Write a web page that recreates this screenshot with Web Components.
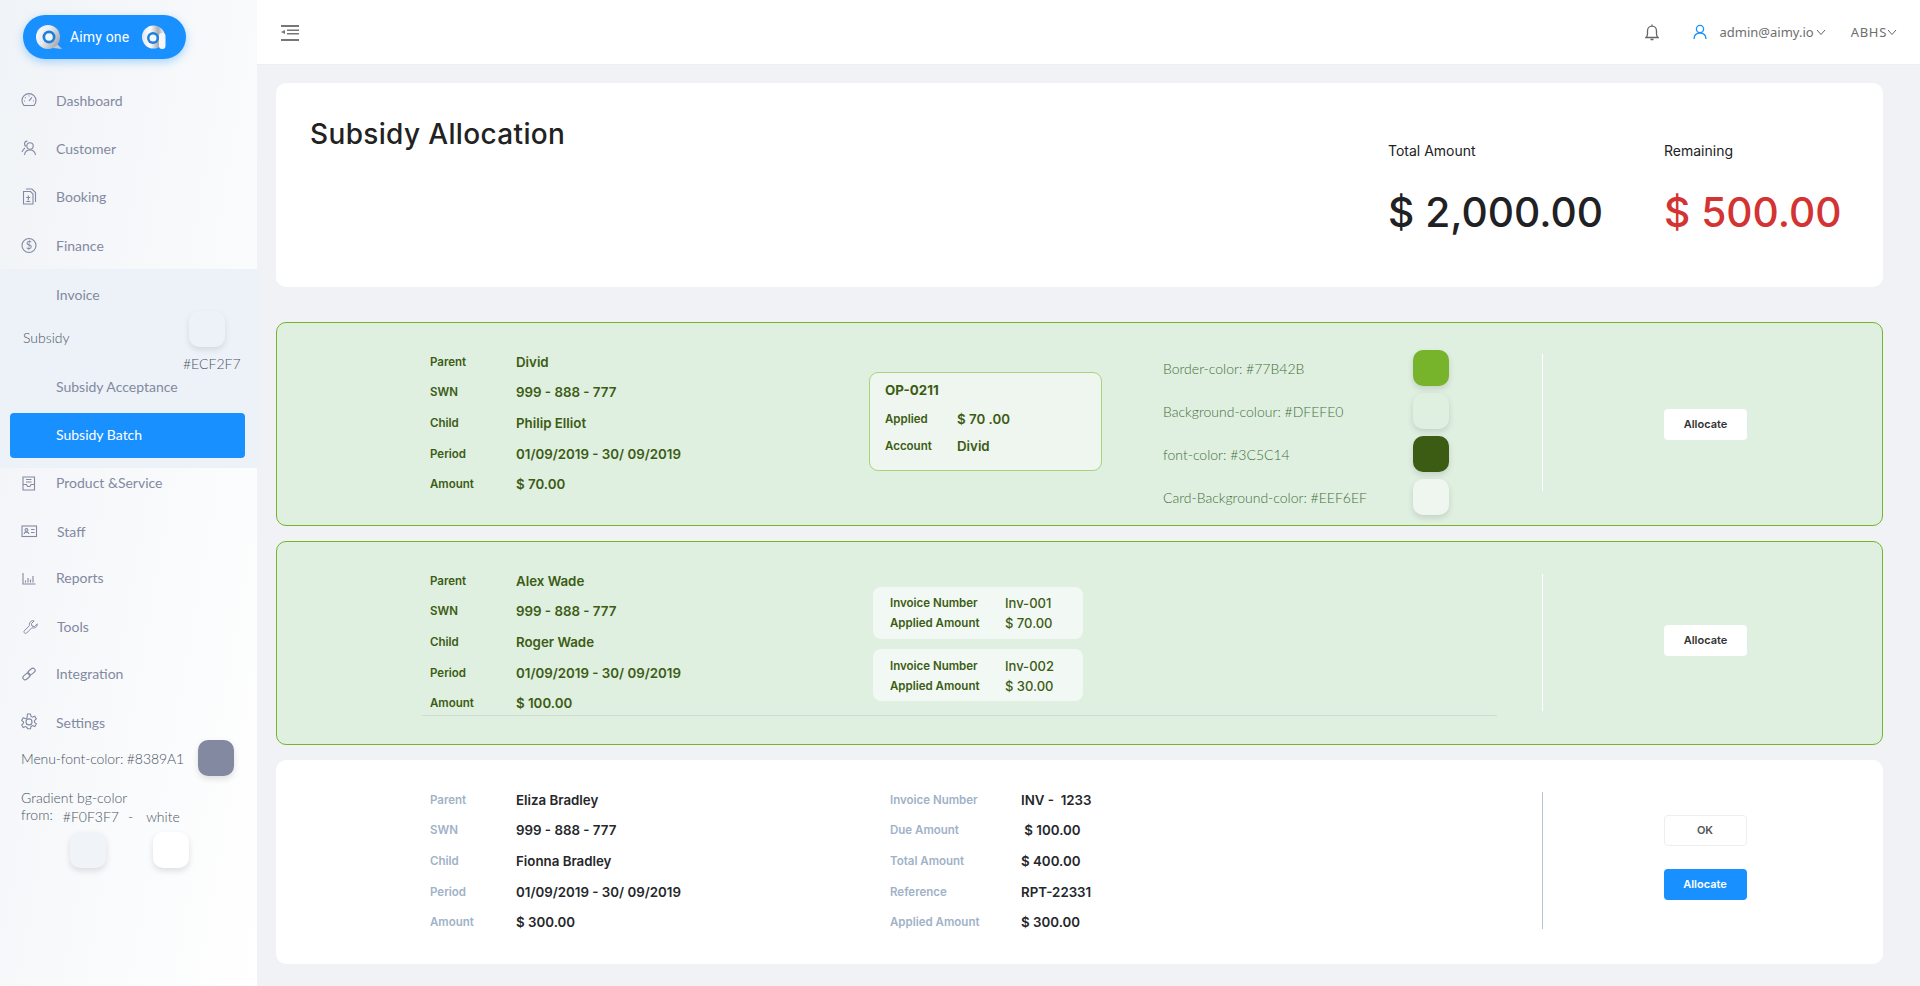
<!doctype html>
<html lang="en">
<head>
<meta charset="utf-8">
<title>Subsidy Allocation</title>
<style>
  html, body { margin: 0; height: 986px; overflow: hidden; background: #f0f2f5; font-family: Inter, sans-serif; }
</style>
</head>
<body>
<app-shell>
  <side-bar slot="side">
    <brand-pill></brand-pill>
    <nav-item icon="gauge" style="margin-top:18px">Dashboard</nav-item>
    <nav-item icon="people">Customer</nav-item>
    <nav-item icon="booking">Booking</nav-item>
    <nav-item icon="dollar" style="margin-top:1px">Finance</nav-item>
    <sub-menu>
      <nav-item>Invoice</nav-item>
      <nav-group>Subsidy</nav-group>
      <nav-item style="margin-top:6px">Subsidy Acceptance</nav-item>
      <nav-item active style="margin-top:2px">Subsidy Batch</nav-item>
    </sub-menu>
    <nav-item icon="product" style="margin-top:-9px">Product &amp;Service</nav-item>
    <nav-item icon="staff" shift style="margin-top:1px">Staff</nav-item>
    <nav-item icon="reports" style="margin-top:-2px">Reports</nav-item>
    <nav-item icon="tools" shift style="margin-top:1px">Tools</nav-item>
    <nav-item icon="link" style="margin-top:-1px">Integration</nav-item>
    <nav-item icon="gear" style="margin-top:1px">Settings</nav-item>
    <menu-notes></menu-notes>
  </side-bar>
  <top-bar slot="top"></top-bar>
  <summary-card slot="main"></summary-card>
  <allocation-card slot="main" tone="green" style="margin-top:35px">
    <detail-list slot="details">
      <info-row label="Parent" value="Divid"></info-row>
      <info-row label="SWN" value="999 - 888 - 777"></info-row>
      <info-row label="Child" value="Philip Elliot"></info-row>
      <info-row label="Period" value="01/09/2019 - 30/ 09/2019"></info-row>
      <info-row label="Amount" value="$ 70.00"></info-row>
    </detail-list>
    <credit-box slot="middle"></credit-box>
    <color-notes slot="extra"></color-notes>
    <action-button slot="action" kind="plain">Allocate</action-button>
  </allocation-card>
  <allocation-card slot="main" tone="green" ruled style="margin-top:15px">
    <detail-list slot="details">
      <info-row label="Parent" value="Alex Wade"></info-row>
      <info-row label="SWN" value="999 - 888 - 777"></info-row>
      <info-row label="Child" value="Roger Wade"></info-row>
      <info-row label="Period" value="01/09/2019 - 30/ 09/2019"></info-row>
      <info-row label="Amount" value="$ 100.00"></info-row>
    </detail-list>
    <invoice-chip slot="middle" number="Inv-001" amount="$ 70.00"></invoice-chip>
    <invoice-chip slot="middle" number="Inv-002" amount="$ 30.00" style="padding-top:7px"></invoice-chip>
    <action-button slot="action" kind="plain" style="margin-bottom:6px">Allocate</action-button>
  </allocation-card>
  <allocation-card slot="main" style="margin-top:15px">
    <detail-list slot="details">
      <info-row label="Parent" value="Eliza Bradley"></info-row>
      <info-row label="SWN" value="999 - 888 - 777"></info-row>
      <info-row label="Child" value="Fionna Bradley"></info-row>
      <info-row label="Period" value="01/09/2019 - 30/ 09/2019"></info-row>
      <info-row label="Amount" value="$ 300.00"></info-row>
    </detail-list>
    <detail-list slot="middle" wide>
      <info-row label="Invoice Number" value="INV -  1233"></info-row>
      <info-row label="Due Amount" value="&nbsp;$ 100.00"></info-row>
      <info-row label="Total Amount" value="$ 400.00"></info-row>
      <info-row label="Reference" value="RPT-22331"></info-row>
      <info-row label="Applied Amount" value="$ 300.00"></info-row>
    </detail-list>
    <action-button slot="action" kind="ghost" style="margin-bottom:23px">OK</action-button>
    <action-button slot="action" kind="primary" style="margin-bottom:10px">Allocate</action-button>
  </allocation-card>
</app-shell>

<script>
const ICONS = {
  gauge: '<path d="M5 15.500h10a7 7 0 1 0-10 0z"/><path d="M10 10.800l3-3.500M6 7.300l.8.8M10 5.500v1M5 11h1M14 11h1"/>',
  people: '<circle cx="11" cy="8" r="3.200"/><path d="M5.500 17c.4-3.200 2.500-5 5.500-5s5 1.800 5.500 5M8.500 3.200C7 3 5.800 4 5.600 5.500c-.2 1.300.4 2.300 1.200 3M6 10c-1.400.8-2.300 2-3 4"/>',
  booking: '<path d="M4.500 5.500h7l2.500 2.500v10h-9.500zM7 3h6l3.500 3.500V16"/><path d="M9.300 9.500v5M7.300 11.500h4M7.300 15.500h4"/>',
  dollar: '<circle cx="10" cy="10.500" r="7"/>',
  product: '<path d="M4 5h11.500v13H4zM7 7.500h5.500M7 10h5.500M4 12.500h3.500l1 2h2.500l1-2h3.500"/>',
  staff: '<rect x="3" y="5" width="14.500" height="10.500"/><circle cx="7.500" cy="9" r="1.400"/><path d="M5 13c.3-1.400 1.200-1.900 2.500-1.900s2.200.5 2.500 1.900M12 8.500h3.500M12 11.500h3.500"/>',
  reports: '<path d="M4 6v11h12.500M6.500 15.500v-2M9 15.500V11M11.500 15.500v-3M14 15.500V9"/>',
  tools: '<g transform="translate(2.500 3) scale(.9)"><path d="M17.500 5.500l-3.200 3-2.600-.6-.7-2.700 3-3.100c-2.700-.8-5.500 1.100-5.200 4.200.1.600.1 1-.3 1.400l-5.300 5.300c-1.500 1.700.9 4 2.500 2.500l5.300-5.300c.4-.4.8-.4 1.400-.3 3 .5 5.500-1.600 4.900-4.400z"/></g>',
  link: '<g transform="rotate(-40 10 11)"><rect x="2.500" y="9" width="8" height="4.500" rx="2.250"/><rect x="9.500" y="8.500" width="8" height="4.500" rx="2.250"/></g>',
  gear: '<path d="M8.500 2h3l.5 2.400 1.500.8 2.300-.9 1.500 2.600-1.800 1.600v1.800l1.800 1.600-1.500 2.600-2.300-.9-1.500.8-.5 2.400h-3L8 15.400l-1.500-.8-2.300.9-1.500-2.600 1.800-1.600V10L2.700 8.400l1.500-2.600 2.300.9L8 5.900z"/><circle cx="10" cy="9.900" r="3"/>',
}

class AppShell extends HTMLElement {
  connectedCallback() {
    this.attachShadow({ mode: "open" }).innerHTML = `
      <style>
        :host { display: grid; grid-template-columns: 257px 1fr; height: 986px; }
        .side { position: relative; z-index: 1; }
        .col { display: flex; flex-direction: column; min-width: 0; }
        .main { padding: 18px 37px 0 19px; }
      </style>
      <div class="side"><slot name="side"></slot></div>
      <div class="col">
        <slot name="top"></slot>
        <div class="main"><slot name="main"></slot></div>
      </div>`
  }
}

class SideBar extends HTMLElement {
  connectedCallback() {
    this.attachShadow({ mode: "open" }).innerHTML = `
      <style>
        :host {
          background: linear-gradient(100deg, #f0f3f7 0%, #fff 100%);
          color: #8389a1;
          display: flex;
          flex-direction: column;
          font-family: Lato, sans-serif;
          height: 986px;
          padding-top: 15px;
          box-sizing: border-box;
        }
      </style>
      <slot></slot>`
  }
}

class BrandPill extends HTMLElement {
  connectedCallback() {
    this.attachShadow({ mode: "open" }).innerHTML = `
      <style>
        :host {
          align-items: center;
          align-self: flex-start;
          background: #1890ff;
          border-radius: 22px;
          box-shadow: 0 3px 8px rgba(24, 144, 255, .35);
          box-sizing: border-box;
          color: #fff;
          display: flex;
          font: 400 14px Roboto, sans-serif;
          height: 44px;
          letter-spacing: .15px;
          margin-left: 23px;
          padding-left: 13px;
          width: 163px;
        }
        span { margin: 0 13px 0 8px; white-space: nowrap; }
        svg { display: block; }
      </style>
      <svg width="26" height="24" viewBox="0 0 26 24">
        <defs><linearGradient id="a" x1="0" x2="1" y1="0" y2="0.6"><stop offset="0" stop-color="#fff"/><stop offset=".5" stop-color="#e6ecf2"/><stop offset="1" stop-color="#a9adb5"/></linearGradient></defs>
        <path d="M20 18l6 6-9-1z" fill="#c4c8ce"/>
        <circle cx="12" cy="12" r="12" fill="url(#a)"/>
        <circle cx="13" cy="12" r="6.500" fill="#1c80dc"/>
        <circle cx="13" cy="12" r="3.800" fill="#f2f7fb"/>
      </svg>
      <span>Aimy one</span>
      <svg width="24" height="24" viewBox="0 0 24 24">
        <defs><linearGradient id="b" x1="0" x2="1" y1="0" y2="0"><stop offset="0" stop-color="#dfe5ea"/><stop offset=".35" stop-color="#fff"/><stop offset=".7" stop-color="#a9adb5"/><stop offset="1" stop-color="#fff"/></linearGradient></defs>
        <circle cx="11.500" cy="12" r="11.500" fill="url(#b)"/>
        <rect x="17" y="8" width="6.500" height="16" rx="3.200" fill="#f4f6f8"/>
        <circle cx="11" cy="13" r="6" fill="#1c80dc"/>
        <circle cx="11" cy="13" r="3.500" fill="#f2f7fb"/>
      </svg>`
  }
}

class NavItem extends HTMLElement {
  connectedCallback() {
    const name = this.getAttribute("icon")
    const dollar = name === "dollar"
      ? '<text x="10" y="14.300" text-anchor="middle" font-size="11" font-family="Lato" fill="currentColor" stroke="none">$</text>'
      : ""
    const icon = name
      ? `<svg width="20" height="20" viewBox="0 0 20 20" fill="none" stroke="currentColor" stroke-width="1.100">${ICONS[name]}${dollar}</svg>`
      : ""
    this.attachShadow({ mode: "open" }).innerHTML = `
      <style>
        :host { display: block; height: 48px; color: #8389a1; }
        :host([active]) { background: #1890ff; border-radius: 4px; color: #fff; height: 45px; margin: 0 15px 0 10px; }
        .row { align-items: center; display: flex; font-size: 14px; height: 100%; padding: 0 0 2px 56px; position: relative; box-sizing: border-box; }
        :host([active]) .row { padding-left: 46px; }
        :host([shift]) .row { padding-left: 57px; }
        svg { left: 19px; position: absolute; top: 13px; }
      </style>
      <div class="row">${icon}<slot></slot></div>`
  }
}

class SubMenu extends HTMLElement {
  connectedCallback() {
    this.attachShadow({ mode: "open" }).innerHTML = `
      <style>
        :host { background: #ecf2f7; display: flex; flex-direction: column; margin: -1px -3px 0 0; padding: 2px 0 10px; position: relative; }
        .chip { background: #ecf2f7; border-radius: 10px; box-shadow: 0 3px 6px rgba(0,0,0,.1); height: 36px; left: 189px; position: absolute; top: 42px; width: 36px; }
        .hex { color: #4a5462; font-size: 14px; font-weight: 300; left: 183px; position: absolute; top: 86px; }
      </style>
      <slot></slot>
      <div class="chip"></div>
      <div class="hex">#ECF2F7</div>`
  }
}

class NavGroup extends HTMLElement {
  connectedCallback() {
    this.attachShadow({ mode: "open" }).innerHTML = `
      <style>
        :host { align-items: center; box-sizing: border-box; color: #4a5462; display: flex; font-size: 14px; font-weight: 300; height: 38px; padding: 0 0 2px 23px; }
      </style>
      <slot></slot>`
  }
}

class ColorChip extends HTMLElement {
  connectedCallback() {
    this.attachShadow({ mode: "open" }).innerHTML = `
      <style>
        :host { background: var(--chip, #fff); border-radius: 10px; box-shadow: 0 3px 6px rgba(0,0,0,.12); display: block; height: 36px; width: 36px; }
      </style>`
  }
}

class MenuNotes extends HTMLElement {
  connectedCallback() {
    this.attachShadow({ mode: "open" }).innerHTML = `
      <style>
        :host { color: #4a5462; display: block; font-size: 14px; font-weight: 300; margin-top: -7px; padding-left: 21px; }
        .top { align-items: center; display: flex; height: 36px; letter-spacing: -.1px; }
        .top color-chip { margin-left: auto; margin-right: 23px; }
        .head { line-height: 17px; margin-top: 13px; }
        .from { display: flex; line-height: 17px; margin-top: 2px; }
        .from span:nth-child(1) { margin-top: -2px; }
        .from span:nth-child(2) { margin-left: 10px; }
        .from span:nth-child(3) { margin-left: 9px; }
        .from span:nth-child(4) { margin-left: 13px; }
        .chips { display: flex; gap: 47px; margin: 7px 0 0 49px; }
      </style>
      <div class="top">Menu-font-color: #8389A1<color-chip style="--chip:#8389a1"></color-chip></div>
      <div class="head">Gradient bg-color</div>
      <div class="from"><span>from:</span><span>#F0F3F7</span><span>-</span><span>white</span></div>
      <div class="chips"><color-chip style="--chip:#f0f3f7"></color-chip><color-chip style="--chip:#fff"></color-chip></div>`
  }
}

class TopBar extends HTMLElement {
  connectedCallback() {
    const chevron = '<svg class="chev" width="10" height="7" viewBox="0 0 10 7" fill="none" stroke="#666" stroke-width="1"><path d="M1 1l4 4.500L9 1"/></svg>'
    this.attachShadow({ mode: "open" }).innerHTML = `
      <style>
        :host {
          align-items: center;
          background: #fff;
          border-bottom: 1px solid #eceef1;
          box-sizing: border-box;
          color: #6e6e6e;
          display: flex;
          font: 400 13px "Noto Sans", sans-serif;
          height: 65px;
          padding: 0 23px 0 24px;
        }
        .grow { flex: 1; }
        svg { display: block; }
        .chev { margin-left: 2px; }
        .menu { margin-top: 1px; }
        .bell { margin-right: 34px; }
        .user { margin-right: 13px; }
        .abhs { letter-spacing: .7px; margin: 0 -2px 0 25px; }
      </style>
      <svg class="menu" width="18" height="16" viewBox="0 0 18 16" fill="#777"><rect width="18" height="2"/><rect x="6" y="4.500" width="12" height="1.500"/><rect x="6" y="8" width="12" height="1.500"/><rect y="14" width="18" height="2"/><path d="M4 5v4L0 7z"/></svg>
      <div class="grow"></div>
      <svg class="bell" width="14" height="17" viewBox="0 0 14 17" fill="none" stroke="#666" stroke-width="1.300"><path d="M1 13.500h12c-1-1-1.500-2-1.500-3.500V7c0-2.800-2-4.800-4.500-4.800S2.500 4.200 2.500 7v3c0 1.500-.5 2.500-1.500 3.500zM5.500 15.500h3M7 .6v1.500"/></svg>
      <svg class="user" width="14" height="16" viewBox="0 0 14 16" fill="none" stroke="#1890ff" stroke-width="1.300"><circle cx="7" cy="5" r="3.600"/><path d="M1 15c.2-3.800 2.600-6 6-6s5.800 2.200 6 6"/></svg>
      <span>admin@aimy.io</span>${chevron}
      <span class="abhs">ABHS</span>${chevron}`
  }
}

class SummaryCard extends HTMLElement {
  connectedCallback() {
    this.attachShadow({ mode: "open" }).innerHTML = `
      <style>
        :host { background: #fff; border-radius: 10px; box-sizing: border-box; display: flex; height: 204px; padding-left: 34px; }
        h1 { color: #222; flex: 1; font: 500 28px Inter, sans-serif; letter-spacing: .35px; margin: 34px 0 0; }
        .stat { padding-top: 59px; width: 276px; }
        .stat:last-child { width: 219px; }
        .label { color: #222; font: 400 14px/18px Inter, sans-serif; }
        .value { color: #1f2124; font: 500 40.700px/48px Inter, sans-serif; margin-top: 29px; white-space: nowrap; }
        .red { color: #d33333; }
      </style>
      <h1>Subsidy Allocation</h1>
      <div class="stat"><div class="label">Total Amount</div><div class="value">$ 2,000.00</div></div>
      <div class="stat"><div class="label">Remaining</div><div class="value red">$ 500.00</div></div>`
  }
}

class AllocationCard extends HTMLElement {
  connectedCallback() {
    this.attachShadow({ mode: "open" }).innerHTML = `
      <style>
        :host {
          --label: #9fb2c8;
          --value: #25272b;
          --rule: #b5c4d4;
          background: #fff;
          border-radius: 10px;
          box-sizing: border-box;
          display: flex;
          height: 204px;
          padding-left: 154px;
        }
        :host([tone="green"]) {
          --label: #3c5c14;
          --value: #3c5c14;
          --rule: #fff;
          background: #dfefe0;
          border: 1px solid #77b42b;
        }
        .body { align-items: center; box-sizing: border-box; display: flex; padding-bottom: 2px; width: 1112px; }
        :host([tone="green"]) .body { width: 1111px; }
        :host([tone="green"]) .details { margin-left: -1px; }
        .details { width: 440px; flex: none; }
        .middle { display: flex; flex-direction: column; gap: 10px; flex: none; width: 293px; }
        :host([ruled]) .body {
          align-items: flex-start;
          align-self: flex-start;
          border-bottom: 1px solid #d0dbd4;
          height: 150px;
          margin: 23.500px 0 0 -9px;
          padding: 0 0 0 9px;
          width: 1075px;
        }
        :host([ruled]) .middle { padding-top: 21px; }
        :host([ruled]) .rule { margin-left: 45px; margin-top: -2px; }
        .extra { flex: none; margin-top: 19px; }
        .rule { align-self: center; background: var(--rule); flex: none; height: 137px; width: 1px; margin-top: -4px; }
        .action { align-items: center; display: flex; flex: 1; flex-direction: column; justify-content: center; padding-right: 16px; }
        :host([tone="green"]) .action { padding-right: 14px; }
      </style>
      <div class="body">
        <div class="details"><slot name="details"></slot></div>
        <div class="middle"><slot name="middle"></slot></div>
        <div class="extra"><slot name="extra"></slot></div>
      </div>
      <div class="rule"></div>
      <div class="action"><slot name="action"></slot></div>`
  }
}

class DetailList extends HTMLElement {
  connectedCallback() {
    this.attachShadow({ mode: "open" }).innerHTML = `
      <style>
        :host { display: block; --label-col: 86px; }
        :host([wide]) { --label-col: 131px; margin-left: 20px; }
      </style>
      <slot></slot>`
  }
}

class InfoRow extends HTMLElement {
  connectedCallback() {
    this.attachShadow({ mode: "open" }).innerHTML = `
      <style>
        :host { align-items: center; display: grid; grid-template-columns: var(--label-col, 86px) 1fr; height: 30.600px; white-space: pre; }
        .l { color: var(--label); font: 600 11.500px Inter, sans-serif; }
        .v { color: var(--value); font: 600 13.300px Inter, sans-serif; }
      </style>
      <span class="l">${this.getAttribute("label")}</span>
      <span class="v">${this.getAttribute("value")}</span>`
  }
}

class CreditBox extends HTMLElement {
  connectedCallback() {
    this.attachShadow({ mode: "open" }).innerHTML = `
      <style>
        :host { background: #eef6ef; border: 1px solid #a9d27f; border-radius: 9px; box-sizing: border-box; color: #3c5c14; display: block; height: 99px; margin: -3px 0 0 -1px; padding: 7px 15px 0; width: 233px; }
        .id { font: 700 13.300px/20px Inter, sans-serif; margin-bottom: 5px; }
        .row { align-items: center; display: grid; grid-template-columns: 72px 1fr; height: 27px; }
        .l { font: 600 11.500px Inter, sans-serif; }
        .v { font: 600 13.300px Inter, sans-serif; }
      </style>
      <div class="id">OP-0211</div>
      <div class="row"><span class="l">Applied</span><span class="v">$ 70 .00</span></div>
      <div class="row"><span class="l">Account</span><span class="v">Divid</span></div>`
  }
}

class InvoiceChip extends HTMLElement {
  connectedCallback() {
    this.attachShadow({ mode: "open" }).innerHTML = `
      <style>
        :host { background: #f2f8f3; border-radius: 8px; box-sizing: border-box; color: #3c5c14; display: block; height: 52px; margin-left: 3px; padding: 6px 17px; width: 210px; }
        .row { align-items: center; display: grid; grid-template-columns: 115px 1fr; height: 20px; }
        .l { font: 600 11.500px Inter, sans-serif; }
        .v { font: 500 13px Inter, sans-serif; }
      </style>
      <div class="row"><span class="l">Invoice Number</span><span class="v">${this.getAttribute("number")}</span></div>
      <div class="row"><span class="l">Applied Amount</span><span class="v">${this.getAttribute("amount")}</span></div>`
  }
}

class ColorNotes extends HTMLElement {
  connectedCallback() {
    const notes = [
      ["Border-color: #77B42B", "#77b42b"],
      ["Background-colour: #DFEFE0", "#dfefe0"],
      ["font-color: #3C5C14", "#3c5c14"],
      ["Card-Background-color: #EEF6EF", "#eef6ef"],
    ]
    this.attachShadow({ mode: "open" }).innerHTML = `
      <style>
        :host { color: #45703c; display: grid; font: 300 14px Lato, sans-serif; gap: 7px 0; grid-template-columns: 250px 36px; align-items: center; }
      </style>
      ${notes.map(([text, hex]) => `<span>${text}</span><color-chip style="--chip:${hex}"></color-chip>`).join("")}`
  }
}

class ActionButton extends HTMLElement {
  connectedCallback() {
    this.attachShadow({ mode: "open" }).innerHTML = `
      <style>
        :host { display: block; }
        button { align-items: center; background: #fff; border: 0; border-radius: 4px; box-sizing: border-box; color: #333; display: flex; font: 600 11px Inter, sans-serif; height: 31px; justify-content: center; padding: 0; width: 83px; }
        :host([kind="primary"]) button { background: #1890ff; color: #fff; }
        :host([kind="ghost"]) button { border: 1px solid #eceef1; color: #555; }
      </style>
      <button type="button"><slot></slot></button>`
  }
}

customElements.define("color-chip", ColorChip)
customElements.define("app-shell", AppShell)
customElements.define("side-bar", SideBar)
customElements.define("brand-pill", BrandPill)
customElements.define("nav-item", NavItem)
customElements.define("sub-menu", SubMenu)
customElements.define("nav-group", NavGroup)
customElements.define("menu-notes", MenuNotes)
customElements.define("top-bar", TopBar)
customElements.define("summary-card", SummaryCard)
customElements.define("allocation-card", AllocationCard)
customElements.define("detail-list", DetailList)
customElements.define("info-row", InfoRow)
customElements.define("credit-box", CreditBox)
customElements.define("invoice-chip", InvoiceChip)
customElements.define("color-notes", ColorNotes)
customElements.define("action-button", ActionButton)
</script>
</body>
</html>
